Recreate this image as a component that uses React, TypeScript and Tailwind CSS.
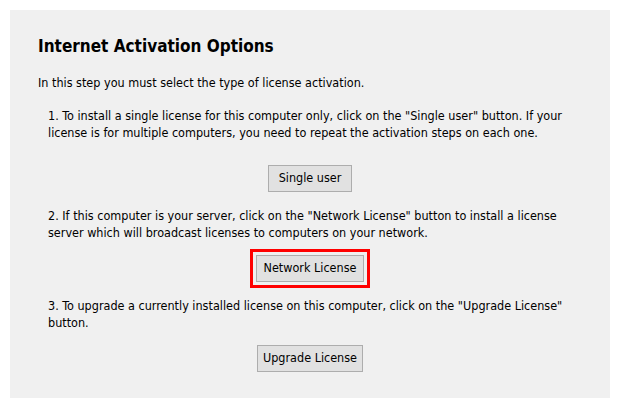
import React from 'react';

const FONT = "font-['DejaVu_Sans_Condensed','DejaVu_Sans',sans-serif]";

const Btn: React.FC<{ label: string; className?: string }> = ({ label, className = '' }) => (
  <button
    className={`h-[27px] border border-[#adadad] bg-[#e1e1e1] text-[12.5px] text-black leading-none ${className}`}
  >
    {label}
  </button>
);

const App: React.FC = () => {
  return (
    <div className={`w-[620px] h-[409px] bg-white p-[10px] ${FONT} text-black`}>
      <div className="h-[388px] bg-[#f0f0f0] pl-[28px] pr-[10px] pt-[26px]">
        {/* Header */}
        <h1 className="text-[17px] font-bold leading-[20px]">Internet Activation Options</h1>
        <p className="mt-[18px] text-[12.5px] leading-[17px]">
          In this step you must select the type of license activation.
        </p>

        {/* Step 1 */}
        <p className="mt-[16px] ml-[10px] text-[12.5px] leading-[17px] whitespace-nowrap">
          1. To install a single license for this computer only, click on the "Single user" button. If your
          <br />
          license is for multiple computers, you need to repeat the activation steps on each one.
        </p>
        <div className="flex justify-center mt-[24px] pr-[18px]">
          <Btn label="Single user" className="w-[84px]" />
        </div>

        {/* Step 2 */}
        <p className="mt-[15px] ml-[10px] text-[12.5px] leading-[17px] whitespace-nowrap">
          2. If this computer is your server, click on the "Network License" button to install a license
          <br />
          server which will broadcast licenses to computers on your network.
        </p>
        <div className="flex justify-center mt-[8px] pr-[18px]">
          <div className="border-[3px] border-[#ff0000] p-[3px]">
            <Btn label="Network License" className="w-[108px]" />
          </div>
        </div>

        {/* Step 3 */}
        <p className="mt-[9px] ml-[10px] text-[12.5px] leading-[17px] whitespace-nowrap">
          3. To upgrade a currently installed license on this computer, click on the "Upgrade License"
          <br />
          button.
        </p>
        <div className="flex justify-center mt-[14px] pr-[18px]">
          <Btn label="Upgrade License" className="w-[106px]" />
        </div>
      </div>
    </div>
  );
};

export default App;
